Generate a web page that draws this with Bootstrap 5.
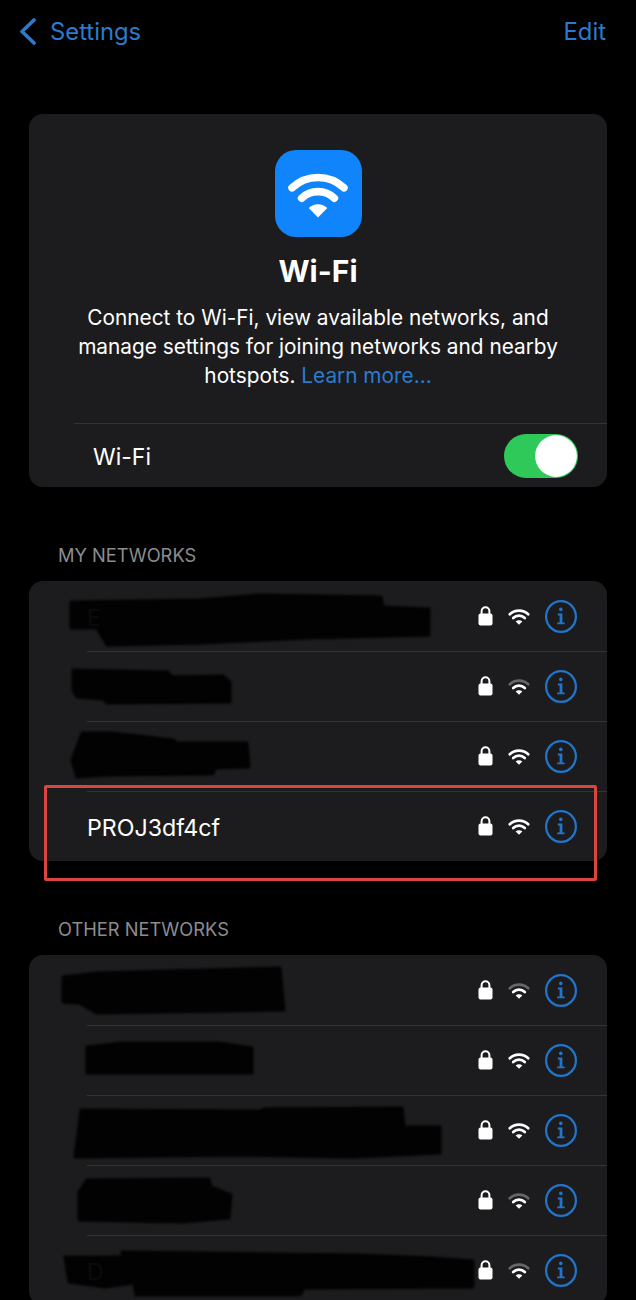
<!doctype html>
<html lang="en">
  <head>
    <meta charset="utf-8">
    <meta name="viewport" content="width=device-width, initial-scale=1">
    <title>Wi-Fi</title>
    <link href="https://cdn.jsdelivr.net/npm/bootstrap@5.3.2/dist/css/bootstrap.min.css" rel="stylesheet">
    <style>
      html, body {
        height: 1300px;
        overflow: hidden;
      }
      body {
        background: #000;
        color: #fff;
        font-family: Inter, "Liberation Sans", sans-serif;
      }
      .top-bar {
        height: 62px;
        padding: 0 30px 0 19px;
        color: #2a7bd0;
        font-size: 23.8px;
      }
      .top-bar span {
        padding-top: 2px;
      }
      .back-link {
        gap: 14px;
      }
      .page-body {
        padding: 52px 29px 0;
      }
      .ios-card {
        background: #1c1c1e;
        border: 0;
        border-radius: 14px;
        color: #fff;
      }
      .hero {
        padding-top: 36px;
      }
      .hero-icon {
        width: 87px;
        height: 87px;
        background: #0f84fb;
        border-radius: 21px;
      }
      .hero-title {
        font-size: 30px;
        font-weight: 700;
        line-height: 40px;
        margin: 14px 0 12px;
      }
      .hero-text {
        font-size: 20.8px;
        line-height: 29px;
        padding: 0 40px;
        margin-bottom: 33px;
      }
      .hero-text a {
        color: #2a7bd0;
        text-decoration: none;
      }
      .toggle-row {
        margin-left: 45px;
        height: 64px;
        padding: 0 29px 0 19px;
        border-top: 1px solid #333336;
        font-size: 23px;
      }
      .toggle-row > span {
        padding-top: 3px;
      }
      .wifi-switch {
        padding: 0;
        margin: 0;
        min-height: 0;
      }
      .wifi-switch .form-check-input {
        width: 74px;
        height: 44px;
        margin: 0;
        float: none;
        display: block;
        border: 0;
        background-color: #2fc95a;
        background-image: url("data:image/svg+xml,%3csvg xmlns='http://www.w3.org/2000/svg' viewBox='-4 -4 8 8'%3e%3ccircle r='3.8' fill='%23fff'/%3e%3c/svg%3e");
      }
      .group-label {
        font-size: 18.3px;
        line-height: 22px;
        color: #8c8c8e;
        margin: 57px 0 15px 29px;
      }
      .net-card {
        position: relative;
        margin: 0;
      }
      .net-row {
        position: relative;
        height: 70px;
        padding: 0 30px 0 58px;
        background: transparent;
        border: 0;
        color: #fff;
      }
      .net-inner {
        height: 70px;
        font-size: 23.2px;
      }
      .net-inner > span {
        padding-top: 5px;
      }
      .net-row + .net-row::before {
        content: "";
        position: absolute;
        left: 58px;
        right: 0;
        top: 0;
        border-top: 1px solid #333336;
      }
      .net-icons {
        gap: 15px;
        margin-left: auto;
      }
      .scribble {
        position: absolute;
        left: 0;
        top: 0;
        width: 578px;
        height: 70px;
        filter: blur(.8px);
      }
      .scribble polygon {
        fill: #020202;
        fill-opacity: .97;
        stroke: #020202;
        stroke-opacity: .97;
        stroke-width: 3;
        stroke-linejoin: round;
      }
      .lock-ico {
        width: 15px;
        height: 20px;
        color: #fff;
      }
      .wifi-ico {
        width: 22px;
        height: 17px;
        color: #fff;
      }
      .wifi-weak {
        color: #66666a;
      }
      .info-ico {
        width: 32px;
        height: 33px;
        color: #2175cb;
      }
      .hero-wifi {
        width: 62px;
        height: 48px;
        color: #fff;
      }
      .red-box {
        position: absolute;
        left: 15px;
        top: 204px;
        width: 553px;
        height: 96px;
        border: 3px solid #d8463f;
        border-radius: 2px;
        pointer-events: none;
      }
    </style>
  </head>
  <body>
    <svg width="0" height="0" class="d-block position-absolute">
      <symbol id="ico-lock" viewBox="0 0 15 20">
        <rect x="0.5" y="7.6" width="14" height="12" rx="2" fill="currentColor"/>
        <path d="M3.6 8.5V5.2a3.9 3.9 0 0 1 7.8 0V8.5" fill="none" stroke="currentColor" stroke-width="2"/>
      </symbol>
      <symbol id="ico-wifi" viewBox="0 0 22 17">
        <path d="M1.8 6.3A13.4 13.4 0 0 1 20.2 6.3" fill="none" stroke="currentColor" stroke-width="2.7" stroke-linecap="round"/>
        <path d="M5.2 10A8.4 8.4 0 0 1 16.8 10" fill="none" stroke="#fff" stroke-width="2.7" stroke-linecap="round"/>
        <path d="M11 16.8L7.7 13.5A4.7 4.7 0 0 1 14.3 13.5Z" fill="#fff"/>
      </symbol>
      <symbol id="ico-info" viewBox="0 0 32 33">
        <ellipse cx="16" cy="16.5" rx="14.9" ry="15.4" fill="none" stroke="currentColor" stroke-width="2.2"/>
        <circle cx="15.8" cy="9.4" r="1.8" fill="currentColor"/>
        <path d="M12.8 13.6H17.4V22.4H19.6V24.2H12.2V22.4H14.6V15.4H12.8Z" fill="currentColor"/>
      </symbol>
    </svg>

    <div class="top-bar d-flex justify-content-between align-items-center">
      <div class="back-link d-flex align-items-center">
        <svg width="17" height="27" viewBox="0 0 17 27"><path d="M15 2L3 13.5L15 25" fill="none" stroke="currentColor" stroke-width="3.6" stroke-linecap="round" stroke-linejoin="round"/></svg>
        <span>Settings</span>
      </div>
      <span>Edit</span>
    </div>

    <div class="page-body">
      <div class="card ios-card">
        <div class="hero text-center">
          <div class="hero-icon d-flex align-items-center justify-content-center mx-auto">
            <svg class="hero-wifi"><use href="#ico-wifi"/></svg>
          </div>
          <h1 class="hero-title">Wi-Fi</h1>
          <p class="hero-text">Connect to Wi-Fi, view available networks, and manage settings for joining networks and nearby hotspots. <a href="#">Learn more...</a></p>
        </div>
        <div class="toggle-row d-flex justify-content-between align-items-center">
          <span>Wi-Fi</span>
          <div class="form-check form-switch wifi-switch">
            <input class="form-check-input" type="checkbox" role="switch" checked aria-label="Wi-Fi">
          </div>
        </div>
      </div>

      <div class="group-label">MY NETWORKS</div>
      <div class="card ios-card net-card">
        <ul class="list-group list-group-flush">
          <li class="list-group-item net-row">
            <div class="net-inner d-flex align-items-center">
              <span>E</span>
              <div class="net-icons d-flex align-items-center">
                <svg class="lock-ico"><use href="#ico-lock"/></svg>
                <svg class="wifi-ico"><use href="#ico-wifi"/></svg>
                <svg class="info-ico"><use href="#ico-info"/></svg>
              </div>
            </div>
            <svg class="scribble" viewBox="0 0 578 70"><polygon points="42,21 170,19 231,14 352,16 354,26 400,28 400,54 279,57 174,62 78,64 68,47 42,47"/></svg>
          </li>
          <li class="list-group-item net-row">
            <div class="net-inner d-flex align-items-center">
              <div class="net-icons d-flex align-items-center">
                <svg class="lock-ico"><use href="#ico-lock"/></svg>
                <svg class="wifi-ico wifi-weak"><use href="#ico-wifi"/></svg>
                <svg class="info-ico"><use href="#ico-info"/></svg>
              </div>
            </div>
            <svg class="scribble" viewBox="0 0 578 70"><polygon points="44,19 139,21 143,26 194,25 201,31 201,51 78,52 74,48 48,46 44,39"/></svg>
          </li>
          <li class="list-group-item net-row">
            <div class="net-inner d-flex align-items-center">
              <div class="net-icons d-flex align-items-center">
                <svg class="lock-ico"><use href="#ico-lock"/></svg>
                <svg class="wifi-ico"><use href="#ico-wifi"/></svg>
                <svg class="info-ico"><use href="#ico-info"/></svg>
              </div>
            </div>
            <svg class="scribble" viewBox="0 0 578 70"><polygon points="53,12 83,12 144,19 148,22 218,22 220,46 186,47 184,53 78,54 48,56 43,39"/></svg>
          </li>
          <li class="list-group-item net-row">
            <div class="net-inner d-flex align-items-center">
              <span>PROJ3df4cf</span>
              <div class="net-icons d-flex align-items-center">
                <svg class="lock-ico"><use href="#ico-lock"/></svg>
                <svg class="wifi-ico"><use href="#ico-wifi"/></svg>
                <svg class="info-ico"><use href="#ico-info"/></svg>
              </div>
            </div>
          </li>
        </ul>
        <div class="red-box"></div>
      </div>

      <div class="group-label">OTHER NETWORKS</div>
      <div class="card ios-card net-card">
        <ul class="list-group list-group-flush">
          <li class="list-group-item net-row">
            <div class="net-inner d-flex align-items-center">
              <div class="net-icons d-flex align-items-center">
                <svg class="lock-ico"><use href="#ico-lock"/></svg>
                <svg class="wifi-ico wifi-weak"><use href="#ico-wifi"/></svg>
                <svg class="info-ico"><use href="#ico-info"/></svg>
              </div>
            </div>
            <svg class="scribble" viewBox="0 0 578 70"><polygon points="34,22 68,18 251,13 255,55 68,58 50,48 34,47"/></svg>
          </li>
          <li class="list-group-item net-row">
            <div class="net-inner d-flex align-items-center">
              <div class="net-icons d-flex align-items-center">
                <svg class="lock-ico"><use href="#ico-lock"/></svg>
                <svg class="wifi-ico"><use href="#ico-wifi"/></svg>
                <svg class="info-ico"><use href="#ico-info"/></svg>
              </div>
            </div>
            <svg class="scribble" viewBox="0 0 578 70"><polygon points="58,22 93,18 190,18 223,23 223,48 58,48"/></svg>
          </li>
          <li class="list-group-item net-row">
            <div class="net-inner d-flex align-items-center">
              <div class="net-icons d-flex align-items-center">
                <svg class="lock-ico"><use href="#ico-lock"/></svg>
                <svg class="wifi-ico"><use href="#ico-wifi"/></svg>
                <svg class="info-ico"><use href="#ico-info"/></svg>
              </div>
            </div>
            <svg class="scribble" viewBox="0 0 578 70"><polygon points="52,15 231,16 235,14 373,13 375,32 411,32 411,58 324,62 214,60 46,62"/></svg>
          </li>
          <li class="list-group-item net-row">
            <div class="net-inner d-flex align-items-center">
              <div class="net-icons d-flex align-items-center">
                <svg class="lock-ico"><use href="#ico-lock"/></svg>
                <svg class="wifi-ico wifi-weak"><use href="#ico-wifi"/></svg>
                <svg class="info-ico"><use href="#ico-info"/></svg>
              </div>
            </div>
            <svg class="scribble" viewBox="0 0 578 70"><polygon points="58,15 180,14 182,22 202,30 200,53 154,57 50,55 50,27"/></svg>
          </li>
          <li class="list-group-item net-row">
            <div class="net-inner d-flex align-items-center">
              <span>D</span>
              <div class="net-icons d-flex align-items-center">
                <svg class="lock-ico"><use href="#ico-lock"/></svg>
                <svg class="wifi-ico wifi-weak"><use href="#ico-wifi"/></svg>
                <svg class="info-ico"><use href="#ico-info"/></svg>
              </div>
            </div>
            <svg class="scribble" viewBox="0 0 578 70"><polygon points="36,22 93,22 93,17 328,20 405,23 444,26 444,52 275,53 271,60 107,60 105,48 76,52 40,47"/></svg>
          </li>
        </ul>
      </div>
    </div>

    <script src="https://cdn.jsdelivr.net/npm/bootstrap@5.3.2/dist/js/bootstrap.bundle.min.js"></script>
  </body>
</html>
